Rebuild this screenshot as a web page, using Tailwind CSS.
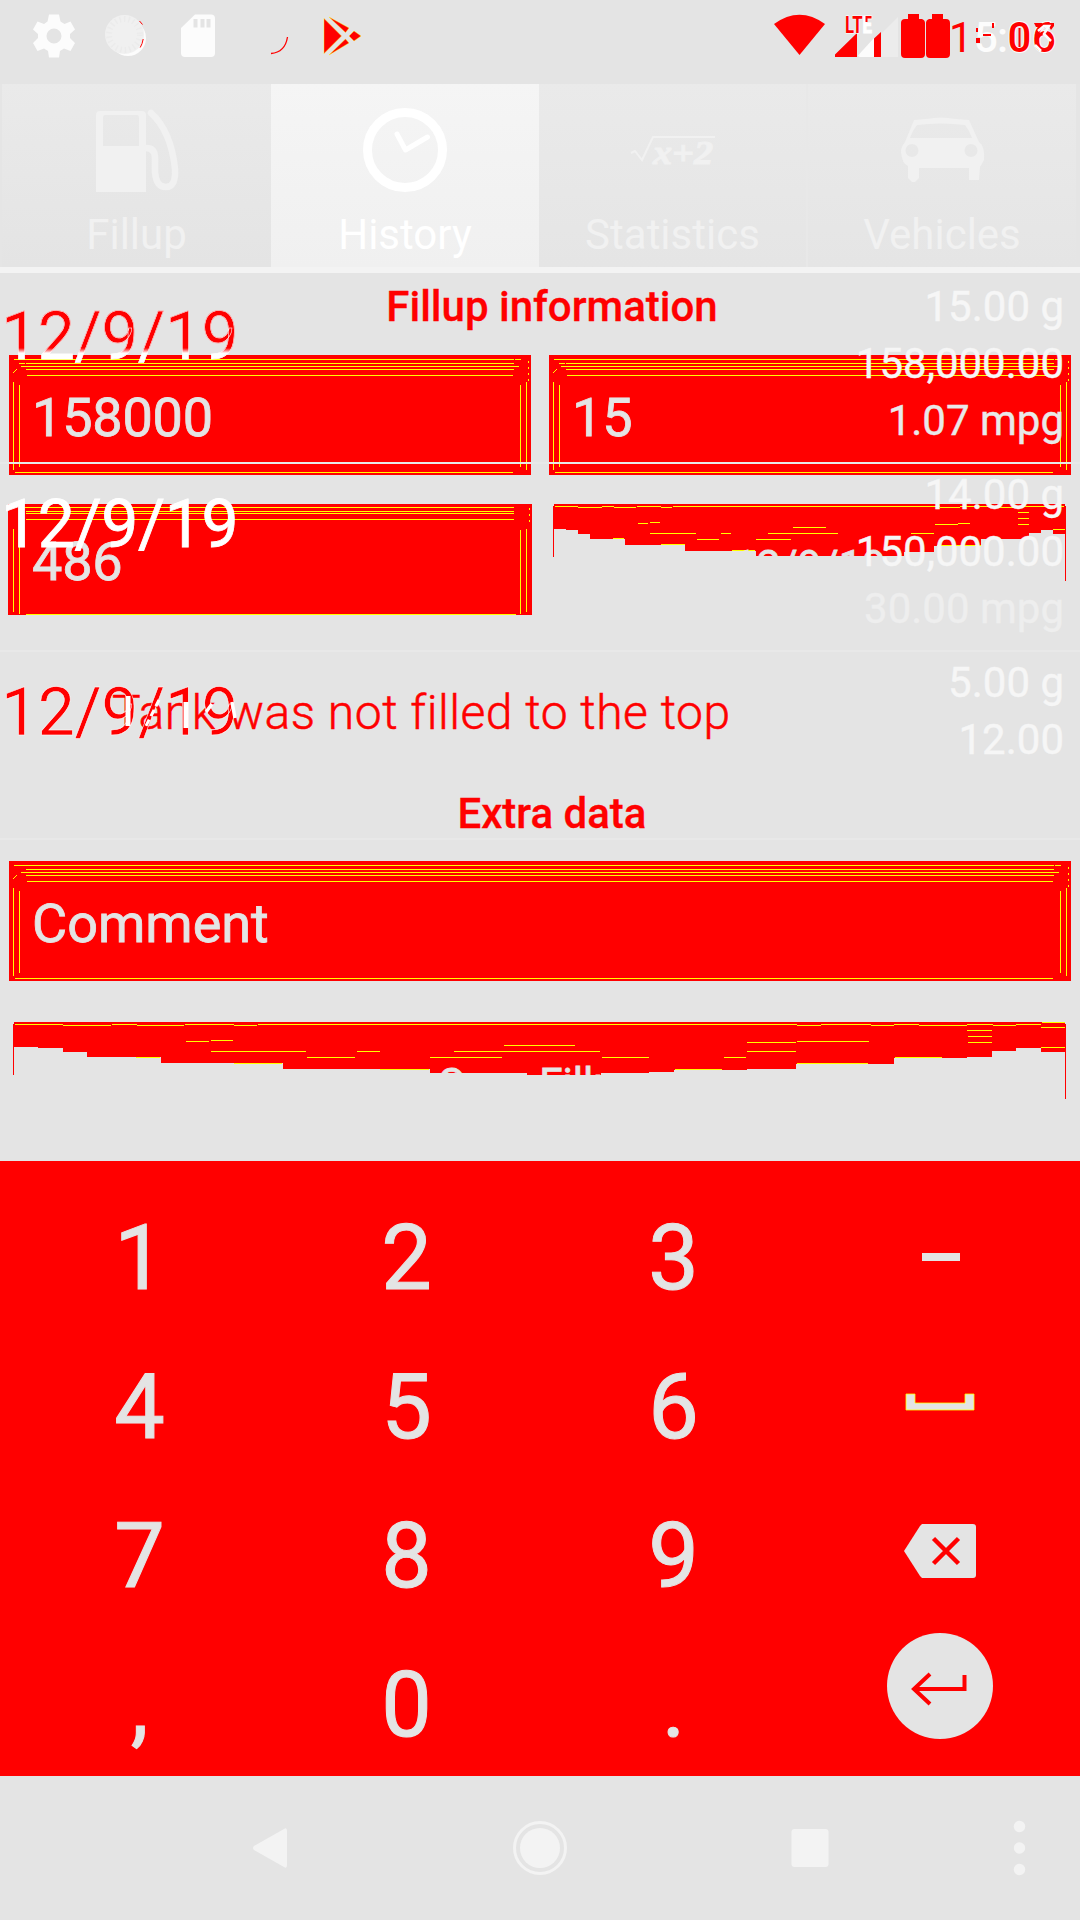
<!DOCTYPE html>
<html lang="en">
<head>
<meta charset="utf-8">
<title>Fillup history</title>
<script src="https://cdn.jsdelivr.net/npm/@tailwindcss/browser@4"></script>
</head>
<body class="w-[1080px] h-[1920px] overflow-hidden bg-[#e4e4e4] font-['Roboto',sans-serif] flex flex-col">

<!-- Status bar -->
<header class="relative h-[84px] shrink-0">
  <svg class="block w-[1080px] h-[84px]" viewBox="0 0 1080 84">
    <g fill="#fcfcfc">
      <path fill-rule="evenodd" d="M49 14.500h10l1.500 7 4 2.500 6-2.500 4.500 8-5 4.500v4l5 5-4.500 8-6.500-2.500-4 2.500-1 6.500H49l-1-6.500-4-2.500-6.500 2.500-4.500-8 5-5v-4l-5-4.500 4.500-8 6.500 2.500 3.500-2.500zM54 28.500a7.500 7.500 0 1 0 0 15 7.500 7.500 0 0 0 0-15z"/>
      <circle cx="128" cy="38" r="18"/>
      <path d="M195 14.500h16a4 4 0 0 1 4 4V53a4 4 0 0 1-4 4h-26a4 4 0 0 1-4-4V28z"/>
    </g>
    <circle cx="124.500" cy="34.500" r="19.500" fill="#f0f0f0"/>
    <circle cx="124.500" cy="34.500" r="15.500" fill="none" stroke="#ebebeb" stroke-width="6" stroke-dasharray="1.500 3"/>
    <path d="M193.500 19h4v8.500h-4zM200.500 19h4v8.500h-4zM206.500 19h4v8.500h-4z" fill="#e4e4e4"/>
    <path d="M139.500 21l3 3.500M143.200 39q-.8 5-3 8.500" stroke="#f00" fill="none"/>
    <path d="M271 53.500q14-1 16.500-16.500" stroke="#f00" stroke-width="1.300" fill="none"/>
    <path d="M324 18.500V53.500L341.500 36zM329 17l20 11-3.500 4.500zM329 55l20-12-3.500-4zM354 31l7 5-7 5-5-5z" fill="#f00" stroke="#ff0" stroke-width=".4"/>
    <path d="M774 24q25.500-18.500 51 0L799.500 55z" fill="#f00"/>
    <path d="M898 17V57H881V34z" fill="#ececec"/>
    <path d="M857 57v-24L835 54.500V57zM874 57h7V32l-7 6.500z" fill="#f00"/>
    <path d="M858 55.500l16-17.500v19h-15z" fill="#fcfcfc"/>
    <path d="M908 14h11v5h3q3 1 3 4v31q0 4-4 4h-16q-4 0-4-4V23q0-4 4-4h3zM932 14h11v5h3q4 0 4 4v31q0 4-4 4h-16q-4 0-4-4V23q0-3 3-4h3z" fill="#f00"/>
    <g font-family="Roboto" font-weight="700" font-size="23" stroke="#fff" stroke-width="1.200" paint-order="stroke">
      <text x="845" y="33" textLength="27" lengthAdjust="spacingAndGlyphs" fill="#f00">LT<tspan fill="#fff">E</tspan></text>
    </g>
    <path d="M865.500 16h6v2.500h-4V22h-2z" fill="#f00"/>
    <g font-family="Roboto" font-weight="500" font-size="42">
      <text x="949" y="52" fill="#f00" font-weight="400">1</text>
      <text x="974" y="52" fill="#fcfcfc">5</text>
      <text x="997" y="52" fill="#fcfcfc">:</text>
      <text x="1007.500" y="52" fill="#f00" stroke="#fcfcfc" stroke-width="2" paint-order="stroke">0</text>
      <text x="1032" y="52" fill="#f00" stroke="#fcfcfc" stroke-width="2" paint-order="stroke">6</text>
    </g>
    <path d="M976 28h2v4h-2zM976 38h4v5h-4zM983 34h8v2h-8zM992 23h2v5h-2zM1034 23h8v4h-6zM1047 23h7v3l-3 4z" fill="#f00"/>
    <path d="M1019.500 28v19" stroke="#f00" stroke-width="2"/>
    <path d="M1038 31l6-5h5l-5 8 7 7M1035 45l6 6" stroke="#fcfcfc" stroke-width="2.500" fill="none"/>
  </svg>
</header>

<!-- Tabs -->
<nav class="grid grid-cols-[271px_268px_269px_272px] h-[183px] shrink-0 text-[42px] leading-[50px] text-center text-[#f1f1f1]">
  <div class="flex flex-col items-center pt-[22px] bg-linear-to-b from-[#eaeaea] to-[#e4e4e4] border-l-2 border-[#e5e5e5]">
    <svg class="w-[90px] h-[88px]" viewBox="92 106 90 88"><path fill-rule="evenodd" fill="#f1f1f1" d="M100 111h42q4 0 4 4v77H96v-77q0-4 4-4zM105 115q-2 0-2 3v28h36v-28q0-3-2-3z"/><path d="M146 148q9 0 9 10v14q1 15 11 15 10 0 9-18-4-38-24-56" fill="none" stroke="#f1f1f1" stroke-width="6.500" stroke-linecap="round"/></svg>
    <span class="mt-[16px]">Fillup</span>
  </div>
  <div class="flex flex-col items-center pt-[22px] bg-linear-to-b from-[#f5f5f5] to-[#f0f0f0] text-white">
    <svg class="w-[90px] h-[88px]" viewBox="360 106 90 88" fill="none" stroke="#fff"><circle cx="405" cy="150" r="37.500" stroke-width="9"/><path d="M397 134l8.500 16 22-13" stroke-width="5" stroke-linecap="round" stroke-linejoin="round"/></svg>
    <span class="mt-[16px]">History</span>
  </div>
  <div class="flex flex-col items-center pt-[22px] bg-linear-to-b from-[#eaeaea] to-[#e5e5e5] border-r-2 border-[#e8e8e8]">
    <svg class="w-[90px] h-[88px]" viewBox="628 106 90 88"><path d="M631 153l4-2 7 9 11-23h62" fill="none" stroke="#f1f1f1" stroke-width="2"/><text x="653" y="164" textLength="60" lengthAdjust="spacingAndGlyphs" fill="#f1f1f1" stroke="#f1f1f1" font-family="Liberation Serif, serif" font-style="italic" font-weight="700" font-size="33">x+2</text></svg>
    <span class="mt-[16px]">Statistics</span>
  </div>
  <div class="flex flex-col items-center pt-[22px] bg-linear-to-b from-[#eaeaea] to-[#e5e5e5] border-r-4 border-[#e5e5e5]">
    <svg class="w-[90px] h-[88px]" viewBox="898 106 90 88"><path fill="#f1f1f1" fill-rule="evenodd" d="M915 120l12-1q15-3 30 0l13 1q5 11 10 22 6 4 5 18-2 4-4 7l-1 13h-10v-12h-50v10l-4 4h-3l-4-4v-12q-6-2-7-14 0-5 4-10 5-12 9-22zM918 125q-5 6-7 13h62q-3-8-7-13-24-3-48 0zM913 144a6.500 6.500 0 1 0 0 13 6.500 6.500 0 0 0 0-13zM972 144a6.500 6.500 0 1 0 0 13 6.500 6.500 0 0 0 0-13z"/></svg>
    <span class="mt-[16px]">Vehicles</span>
  </div>
</nav>
<div class="h-[6px] shrink-0 bg-[#f3f3f3]"></div>

<main class="relative h-[888px] shrink-0">
  <!-- Form -->
  <section class="absolute inset-0 flex flex-col text-[#e4e4e4] text-[54px] [-webkit-text-stroke:0.8px_currentColor]">
    <h2 class="h-[82px] pt-[9px] pl-[24px] text-center text-[42px] leading-[50px] font-medium text-[#f00] [-webkit-text-stroke:0.3px_currentColor]">Fillup information</h2>
    <div class="flex gap-[18px] px-[9px] h-[120px]">
      <div class="relative w-[522px] bg-[#f00] pl-[23px] leading-[126px] tracking-[-0.2px]">
        <svg class="absolute inset-0 w-full h-full" viewBox="0 0 522 120" fill="none" stroke="#ff0" shape-rendering="crispEdges"><path d="M5 4.500H505M17 8.500H505M12 11.500H510M17 14.500H505M18 20.500H504M6 117.500H504M4.500 27V115M10.500 30V112M511.500 30V112M517.500 27V115M4 18l4-4M10 8h6M506 4.500h6M519.500 6v2M519.500 12v2M519.500 18v2M519.500 24v2"/></svg>
        <span class="relative">158000</span>
      </div>
      <div class="relative w-[522px] bg-[#f00] pl-[23px] leading-[126px] tracking-[-0.2px]">
        <svg class="absolute inset-0 w-full h-full" viewBox="0 0 522 120" fill="none" stroke="#ff0" shape-rendering="crispEdges"><path d="M5 4.500H505M17 8.500H505M12 11.500H510M17 14.500H505M18 20.500H504M6 117.500H504M4.500 27V115M10.500 30V112M511.500 30V112M517.500 27V115M4 18l4-4M10 8h6M506 4.500h6M519.500 6v2M519.500 12v2M519.500 18v2M519.500 24v2"/></svg>
        <span class="relative">15</span>
      </div>
    </div>
    <div class="flex gap-[21px] pl-[8px] mt-[29px] h-[111px]">
      <div class="relative w-[524px] bg-[#f00] pl-[24px] leading-[116px] tracking-[-0.2px]">
        <svg class="absolute inset-0 w-full h-full" viewBox="0 0 524 111" fill="none" stroke="#ff0" shape-rendering="crispEdges"><path d="M17 3.500H506M18 7.500H506M18 9.500H506M18 15.500H506M18 110.500H508M5.500 25V108M11.500 26V110M512.500 26V110M518.500 25V108M521.500 4v2M521.500 10v2M521.500 16v2"/></svg>
        <span class="relative">486</span>
      </div>
      <div class="relative w-[513px] text-center text-[42px] leading-[50px] pt-[37px]">
        <svg class="absolute left-0 top-0 w-[513px] h-[111px]" viewBox="553 504 513 111" shape-rendering="crispEdges"><path fill="#f00" d="M554 504H1065V506H1066V581H1065V534H1053V530H1041V533H1029V539H981V546H934V552H904V556H756V551H685V545H625V539H590V534H578V530H566V529H554V557H553V506H554z"/><path stroke="#ff0" fill="none" d="M555 506.500h23M578 507.500h24M602 506.500h12M614 507.500h22M637 506.500h24M661 507.500h11M673 506.500h267M940 507.500h20M960 506.500h30M990 507.500h30M1020 506.500h44M638 523.500h10M650 522.500h10M650 533.500h46M721 533.500h10M768 533.500h70M697 539.500h22M756 539.500h35M793 527.500h33M935 524.500h23M958 523.500h12M911 533.500h23M1018 512.500h11M1018 518.500h11M1018 524.500h11M1053 529.500h12M613 538.500h11M661 544.500h24M732 550.500h23M937 545.500h44"/></svg>
        <span class="relative">12/9/19</span>
      </div>
    </div>
    <p class="h-[168px] pt-[68px] pl-[112px] text-[48px] leading-[60px] tracking-[0.5px] font-light text-[#f00] whitespace-nowrap [-webkit-text-stroke:0.5px_#f00]">Tank was not filled to the top</p>
    <h2 class="h-[78px] pt-[6px] pl-[24px] text-center text-[42px] leading-[50px] font-medium text-[#f00] [-webkit-text-stroke:0.3px_currentColor]">Extra data</h2>
    <div class="relative ml-[9px] w-[1062px] h-[120px] bg-[#f00] pl-[23px] leading-[126px]">
      <svg class="absolute inset-0 w-full h-full" viewBox="0 0 1062 120" fill="none" stroke="#ff0" shape-rendering="crispEdges"><path d="M5 4.500H1045M17 8.500H1045M12 11.500H1050M17 14.500H1045M18 20.500H1044M6 117.500H1044M4.500 27V115M10.500 30V112M1051.500 30V112M1057.500 27V115M4 18l4-4M1046 4.500h6M1059.500 6v2M1059.500 12v2M1059.500 18v2M1059.500 24v2"/></svg>
      <span class="relative">Comment</span>
    </div>
    <div class="relative ml-[13px] mt-[41px] w-[1053px] h-[110px] text-center text-[42px] leading-[50px] pt-[37px]">
      <svg class="absolute left-0 top-0 w-[1053px] h-[110px]" viewBox="13 1022 1053 110" shape-rendering="crispEdges"><path fill="#f00" d="M14 1022H1065V1024H1066V1099H1065V1052H1041V1048H1016V1051H992V1057H967V1058H894V1064H796V1069H747V1070H674V1072H649V1073H601V1075H527V1073H430V1069H283V1063H161V1057H87V1052H63V1048H38V1047H14V1075H13V1024H14z"/><path stroke="#ff0" fill="none" d="M15 1024.500h48M63 1025.500h48M112 1024.500h25M137 1025.500h47M185 1024.500h49M234 1025.500h23M258 1024.500h539M797 1025.500h24M821 1024.500h50M871 1025.500h23M894 1024.500h25M919 1025.500h48M967 1024.500h26M993 1025.500h23M1016 1024.500h25M1042 1022.500h23M186 1041.500h23M211 1040.500h22M211 1051.500h95M357 1051.500h23M454 1051.500h146M504 1045.500h71M307 1057.500h48M430 1057.500h72M602 1057.500h47M724 1057.500h22M747 1051.500h0M747 1042.500h49M797 1042.500h0M797 1041.500h48M845 1041.500h24M747 1051.500h49M967 1030.500h25M968 1036.500h24M968 1042.500h24M1041 1027.500h24M1041 1047.500h24M136 1057.500h24M234 1063.500h48M380 1069.500h49M675 1069.500h47M797 1063.500h71M895 1057.500h47"/></svg>
      <span class="relative">Save Fillup</span>
    </div>
  </section>

  <!-- History rows -->
  <section class="relative flex flex-col text-[42px] leading-[57px] text-[#f6f6f6] pt-[3px]">
    <div class="flex justify-between h-[188px] border-b-2 border-[#e8e8e8] pl-px pr-[16px] pt-[2px]">
      <span class="mt-[26px] h-[72px] text-[66px] leading-[66px] tracking-[-0.4px] text-transparent bg-clip-text bg-[linear-gradient(#f00_0_44px,#fff_49px)] [-webkit-text-stroke:0.5px_#fff]">12/9/19</span>
      <div class="text-right [-webkit-text-stroke:0.4px_currentColor]"><div>15.00 g</div><div>158,000.00</div><div class="text-[#e9e9e9]">1.07 mpg</div></div>
    </div>
    <div class="flex justify-between h-[188px] border-b-2 border-[#e8e8e8] pl-px pr-[16px] pt-[2px]">
      <span class="mt-[26px] text-[66px] leading-[66px] tracking-[-0.4px] text-white [-webkit-text-stroke:0.8px_#fff]">12/9/19</span>
      <div class="text-right [-webkit-text-stroke:0.4px_currentColor]"><div>14.00 g</div><div>150,000.00</div><div class="text-[#eee]">30.00 mpg</div></div>
    </div>
    <div class="flex justify-between h-[188px] border-b-2 border-[#e8e8e8] pl-px pr-[16px] pt-[2px]">
      <span class="mt-[26px] text-[66px] leading-[66px] tracking-[-0.4px] text-[#f00] [-webkit-text-stroke:0.5px_#fff]">12/9/19</span>
      <div class="text-right [-webkit-text-stroke:0.4px_currentColor]"><div>5.00 g</div><div>12.00</div></div>
    </div>
    <!-- Light fragments where the date and the notice cross -->
    <svg class="absolute left-[110px] top-[415px] w-[130px] h-[64px]" viewBox="110 688 130 64" fill="none" stroke="#fff"><path d="M128 696v30" stroke-width="5"/><path d="M159 700l-14 28" stroke-width="3" stroke-dasharray="7 4"/><path d="M186 702v26" stroke-width="5"/><path d="M212 704l-6 8M232 702l3 16" stroke-width="3.500"/></svg>
  </section>
</main>

<!-- Keypad -->
<section class="h-[615px] shrink-0 bg-[#f00] text-[#e4e4e4] text-[90px] leading-[149px] text-center pt-[23px] pl-[6px] [-webkit-text-stroke:1px_#e4e4e4]">
  <div class="grid grid-cols-[267px_267px_267px_267px] grid-rows-[149px_149px_149px_149px]">
    <div>1</div><div>2</div><div>3</div>
    <div class="flex items-center justify-center"><div class="w-[38px] h-[8px] mt-[-3px] bg-[#e4e4e4]"></div></div>
    <div>4</div><div>5</div><div>6</div>
    <div class="flex justify-center"><svg class="w-[110px] h-[149px]" viewBox="886 1333 110 149"><path d="M906 1394h9v9h50v-9h9v16h-68z" fill="#e4e4e4" stroke="#ff0" stroke-width=".8"/></svg></div>
    <div>7</div><div>8</div><div>9</div>
    <div class="flex justify-center"><svg class="w-[110px] h-[149px]" viewBox="886 1482 110 149"><path d="M922 1524h51q3 0 3 3v48q0 3-3 3h-51l-2-2-16-25 16-25z" fill="#e4e4e4"/><path d="M933.500 1538.500l25 25M958.500 1538.500l-25 25" stroke="#f00" stroke-width="4.500"/></svg></div>
    <div>,</div><div>0</div><div>.</div>
    <div class="flex justify-center"><svg class="w-[110px] h-[149px]" viewBox="886 1631 110 149"><circle cx="940" cy="1686" r="53" fill="#e4e4e4"/><path d="M964.500 1675v14H914M930 1674l-16 15 16 15" fill="none" stroke="#f00" stroke-width="4"/></svg></div>
  </div>
</section>

<!-- Navigation bar -->
<footer class="h-[144px] shrink-0">
  <svg class="block w-[1080px] h-[144px]" viewBox="0 1776 1080 144" fill="#f3f3f3">
    <path d="M284 1829q3-2 3 2v34q0 4-3 2l-30-17q-2-2 0-4z"/>
    <circle cx="540" cy="1848" r="20"/><circle cx="540" cy="1848" r="25.500" fill="none" stroke="#f3f3f3" stroke-width="3"/>
    <rect x="791.500" y="1829" width="37" height="38" rx="3"/>
    <circle cx="1019.500" cy="1826.500" r="5.700"/><circle cx="1019.500" cy="1848" r="5.700"/><circle cx="1019.500" cy="1869.500" r="5.700"/>
  </svg>
</footer>
</body>
</html>
